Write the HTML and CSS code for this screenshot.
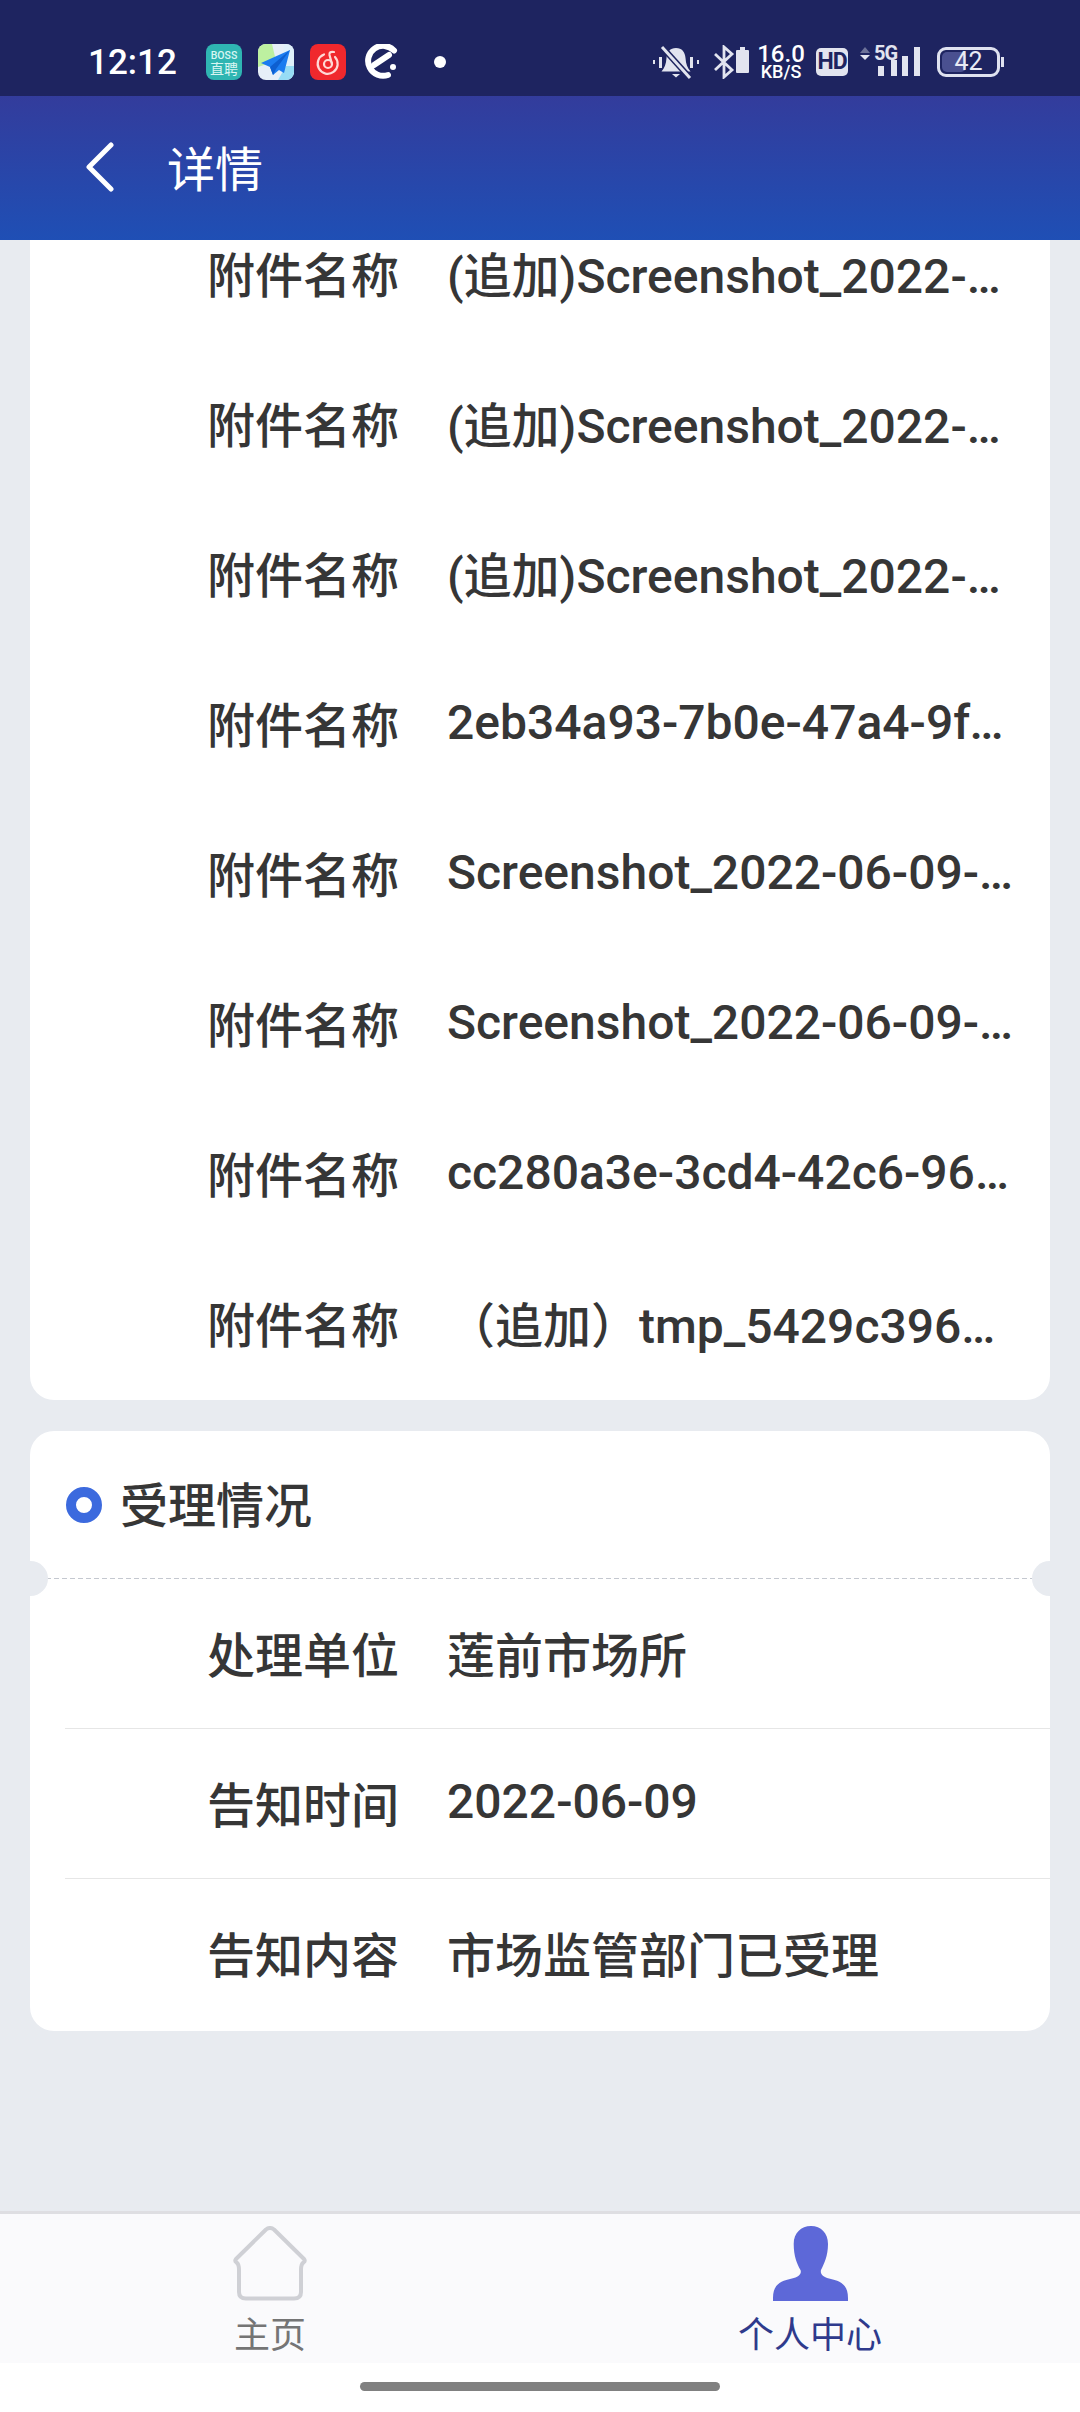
FILE: index.html
```html
<!DOCTYPE html>
<html lang="zh-CN">
<head>
    <meta charset="UTF-8">
    <meta name="viewport" content="width=device-width, initial-scale=1.0">
    <title>详情</title>
    <link rel="stylesheet" href="styles.css">
</head>
<body>
    <div class="page">
        <!-- status bar -->
        <div class="statusbar">
            <span class="time">12:12</span>
            <div class="notify-icons">
                <svg class="app-icon" viewBox="0 0 36 36">
                    <rect width="36" height="36" rx="8" fill="#2fb5b2"/>
                    <text x="18" y="15" text-anchor="middle" class="boss-en">BOSS</text>
                    <text x="18" y="30" text-anchor="middle" class="boss-cn">直聘</text>
                </svg>
                <svg class="app-icon" viewBox="0 0 36 36">
                    <rect width="36" height="36" rx="8" fill="#e6eff8"/>
                    <path d="M0 8a8 8 0 0 1 8-8h6l4 17-18 6z" fill="#bdf0a0"/>
                    <path d="M26 0h2a8 8 0 0 1 8 8v22h-12z" fill="#dff0fa"/>
                    <path d="M20 36l8-14h8v6a8 8 0 0 1-8 8z" fill="#96dcf5"/>
                    <path d="M32 6L3 19l9 4 3 8 6-5 5 3z" fill="#1b7cf0"/>
                    <path d="M32 6L12 23l3 8 3-6z" fill="#0d5fd0"/>
                </svg>
                <svg class="app-icon" viewBox="0 0 36 36">
                    <rect width="36" height="36" rx="8" fill="#f0282d"/>
                    <path d="M14 10.500A10 10 0 1 0 25 13" fill="none" stroke="#ffd9d6" stroke-width="2.200" stroke-linecap="round"/>
                    <circle cx="18" cy="20" r="4" fill="none" stroke="#ffd9d6" stroke-width="2.200"/>
                    <path d="M22 20L19.500 11Q19 7 24 8" fill="none" stroke="#ffd9d6" stroke-width="2.200" stroke-linecap="round"/>
                </svg>
                <svg class="e-icon" viewBox="0 0 34 36">
                    <path d="M30 6.500A15 15 0 1 0 24 31" fill="none" stroke="#fff" stroke-width="6" stroke-linecap="round"/>
                    <path d="M10 21L25 11" fill="none" stroke="#fff" stroke-width="6" stroke-linecap="round"/>
                    <circle cx="29" cy="23" r="3" fill="#fff"/>
                </svg>
                <span class="dot"></span>
            </div>
            <div class="system-icons">
                <svg class="bell" viewBox="0 0 48 33">
                    <path d="M24 2c-6 0-9 4-9.500 10-.4 6-2 10-5 13.500h29c-3-3.500-4.600-7.500-5-13.500C33 6 30 2 24 2zM20 28h8l-4 3.500z" fill="#e2e4ef"/>
                    <path d="M11 2l27 30" stroke="#1e2460" stroke-width="6"/>
                    <path d="M10 1l28 31" stroke="#e2e4ef" stroke-width="3"/>
                    <path d="M1 14h2v4H1zM7 11h3v11H7zM38 11h3v11h-3zM45 14h2v4h-2z" fill="#e2e4ef"/>
                </svg>
                <svg class="bt" viewBox="0 0 36 34">
                    <path d="M2 9l17 16-8 7V2l8 7L2 25" fill="none" stroke="#e2e4ef" stroke-width="2.800"/>
                    <path d="M24 5h3V2h5v3h3a1 1 0 0 1 1 1v21a1 1 0 0 1-1 1H24a1 1 0 0 1-1-1V6a1 1 0 0 1 1-1z" fill="#e2e4ef"/>
                </svg>
                <div class="speed">
                    <span class="speed-num">16.0</span>
                    <span class="speed-unit">KB/S</span>
                </div>
                <span class="hd">HD</span>
                <div class="signal">
                    <svg viewBox="0 -5 60 37" class="signal-svg">
                        <path d="M0 7l5-6 5 6z" fill="#6d7299"/>
                        <path d="M0 9h10l-5 5z" fill="#e2e4ef"/>
                        <text x="14" y="14" class="five-g">5G</text>
                        <path d="M18 20h6v10h-6zM31 14h6v16h-6zM42 10h6v20h-6zM54 1h6v29h-6z" fill="#e2e4ef"/>
                    </svg>
                </div>
                <div class="battery">
                    <span class="battery-fill"></span>
                    <span class="battery-num">42</span>
                </div>
                <span class="battery-nub"></span>
            </div>
        </div>

        <!-- title bar -->
        <div class="titlebar">
            <svg class="back" viewBox="0 0 28 50">
                <path d="M25 3L3 25l22 22" fill="none" stroke="#fff" stroke-width="5" stroke-linecap="round" stroke-linejoin="round"/>
            </svg>
            <span class="title">详情</span>
        </div>

        <!-- content, already scrolled down -->
        <div class="content">
            <div class="card card-files">
                <div class="row"><span class="label">附件名称</span><span class="value">(追加)Screenshot_2022-06-09-11-42-30-186.jpg</span></div>
                <div class="row"><span class="label">附件名称</span><span class="value">(追加)Screenshot_2022-06-09-11-42-35-204.jpg</span></div>
                <div class="row"><span class="label">附件名称</span><span class="value">(追加)Screenshot_2022-06-09-11-42-41-117.jpg</span></div>
                <div class="row"><span class="label">附件名称</span><span class="value">2eb34a93-7b0e-47a4-9fd2-61c0a8e3b7d5.jpg</span></div>
                <div class="row"><span class="label">附件名称</span><span class="value">Screenshot_2022-06-09-11-40-12-561.jpg</span></div>
                <div class="row"><span class="label">附件名称</span><span class="value">Screenshot_2022-06-09-11-40-20-318.jpg</span></div>
                <div class="row"><span class="label">附件名称</span><span class="value">cc280a3e-3cd4-42c6-96b1-7fe2d04a91c3.jpg</span></div>
                <div class="row"><span class="label">附件名称</span><span class="value">（追加）tmp_5429c396a1e07b.jpg</span></div>
            </div>

            <div class="card card-status">
                <div class="section-head">
                    <span class="ring"></span>
                    <span class="section-title">受理情况</span>
                </div>
                <div class="row row-line"><span class="label">处理单位</span><span class="value">莲前市场所</span></div>
                <div class="row row-line"><span class="label">告知时间</span><span class="value">2022-06-09</span></div>
                <div class="row"><span class="label">告知内容</span><span class="value">市场监管部门已受理</span></div>
            </div>
        </div>

        <!-- bottom tabs -->
        <div class="tabbar">
            <div class="tab">
                <svg class="tab-icon" viewBox="0 0 75 75">
                    <path d="M33 3.500Q37 .5 41 3.500L71 33Q72.500 35 70.500 36.500 68 38 68 44V66Q68 72.500 61 72.500H13Q6 72.500 6 66V44Q6 38 3.500 36.500 1.500 35 3 33Z" fill="none" stroke="#cfd0d5" stroke-width="4" stroke-linejoin="round"/>
                </svg>
                <span class="tab-text">主页</span>
            </div>
            <div class="tab tab-active">
                <svg class="tab-icon" viewBox="0 0 75 75">
                    <path d="M38 0C48 0 55 7 55 18 55 30 51 38 48 44 47 48 50 51 56 52.500 68 55 75 59 75 72V75H0V72C0 59 7 55 19 52.500 25 51 29 48 27.500 44 24 38 20.700 30 20.700 18 20.700 7 28 0 38 0Z" fill="#5d68d8"/>
                </svg>
                <span class="tab-text">个人中心</span>
            </div>
        </div>

        <div class="gesture"><span class="gesture-bar"></span></div>
    </div>
</body>
</html>
```
FILE: styles.css
```css
* {
    box-sizing: border-box;
}
body {
    margin: 0;
    font-family: Roboto, "Noto Sans CJK SC", sans-serif;
    color: #363636;
}
.page {
    display: flex;
    flex-direction: column;
    width: 1080px;
    height: 2412px;
    overflow: hidden;
    background-color: #fff;
}

/* status bar */
.statusbar {
    display: flex;
    align-items: center;
    height: 96px;
    padding: 28px 0 0 88px;
    background-color: #1e2460;
    color: #fff;
    flex-shrink: 0;
}
.time {
    width: 118px;
    font-size: 35px;
    font-weight: 500;
}
.notify-icons {
    display: flex;
    align-items: center;
    gap: 16px;
}
.app-icon {
    width: 36px;
    height: 36px;
}
.e-icon {
    width: 34px;
    height: 36px;
    margin-left: 2px;
}
.dot {
    width: 12px;
    height: 12px;
    margin-left: 20px;
    border-radius: 50%;
    background-color: #fff;
}
.boss-en {
    font-size: 10.5px;
    font-weight: 500;
    fill: #d8f5f2;
}
.boss-cn {
    font-size: 14px;
    font-family: "Noto Sans CJK SC", sans-serif;
    fill: #d8f5f2;
}
.system-icons {
    display: flex;
    align-items: center;
    margin-left: 206px;
}
.bell {
    width: 48px;
    height: 33px;
}
.bt {
    width: 36px;
    height: 34px;
    margin-left: 13px;
}
.speed {
    display: flex;
    flex-direction: column;
    align-items: center;
    width: 46px;
    margin-left: 9px;
    font-weight: 500;
}
.speed-num {
    font-size: 24px;
    line-height: 19px;
}
.speed-unit {
    font-size: 18px;
    line-height: 16px;
}
.hd {
    width: 32px;
    height: 28px;
    margin-left: 12px;
    border-radius: 5px;
    background-color: #e2e4ef;
    color: #1e2460;
    font-size: 23px;
    font-weight: 700;
    letter-spacing: -1px;
    line-height: 28px;
    text-align: center;
}
.signal {
    margin: 0 0 5px 12px;
}
.signal-svg {
    display: block;
    width: 60px;
    height: 37px;
}
.five-g {
    font-size: 20px;
    font-weight: 700;
    letter-spacing: -1px;
    fill: #e2e4ef;
}
.battery {
    position: relative;
    width: 63px;
    height: 30px;
    margin-left: 17px;
    border: 3px solid #dfe2f0;
    border-radius: 9px;
    text-align: center;
}
.battery-fill {
    position: absolute;
    left: 2px;
    top: 2px;
    bottom: 2px;
    width: 24px;
    border-radius: 5px;
    background-color: #4a5090;
}
.battery-num {
    position: relative;
    display: block;
    color: #e8eaf4;
    font-size: 25px;
    line-height: 24px;
}
.battery-nub {
    width: 3px;
    height: 10px;
    margin-left: 1px;
    background-color: #dfe2f0;
}

/* title bar */
.titlebar {
    display: flex;
    align-items: center;
    height: 144px;
    padding-left: 86px;
    background: linear-gradient(#333c9c, #1f4fb5);
    flex-shrink: 0;
}
.back {
    width: 28px;
    height: 50px;
    margin-bottom: 2px;
}
.title {
    margin: 0 0 5px 53px;
    color: #fff;
    font-size: 48px;
}

/* content */
.content {
    flex: 1;
    display: flex;
    flex-direction: column;
    gap: 31px;
    padding: 0 30px;
    overflow: hidden;
    background-color: #e8ebf0;
}
.card {
    position: relative;
    flex-shrink: 0;
    padding-left: 35px;
    border-radius: 24px;
    background-color: #fff;
    overflow: hidden;
}
.card-files {
    margin-top: -41px;
    padding-bottom: 1px;
}
.card-status {
    padding-bottom: 2px;
}
.row {
    display: flex;
    align-items: center;
    gap: 48px;
    height: 150px;
    padding-bottom: 4px;
    font-size: 48px;
}
.row-line {
    border-bottom: 1px solid #e6e6e6;
}
.label {
    width: 334px;
    flex-shrink: 0;
    font-weight: 500;
    text-align: right;
}
.value {
    width: 572px;
    font-weight: 500;
    white-space: nowrap;
    overflow: hidden;
    text-overflow: ellipsis;
}

/* section heading with ticket notches */
.section-head {
    display: flex;
    align-items: center;
    gap: 18px;
    height: 148px;
    margin-left: -35px;
    padding: 0 0 7px 36px;
    position: relative;
    background: repeating-linear-gradient(90deg, #c4c8d0 0 5px, transparent 5px 8px) bottom / 100% 1px no-repeat;
    font-size: 48px;
    font-weight: 500;
}
.section-head::before,
.section-head::after {
    content: "";
    position: absolute;
    bottom: -17px;
    width: 35px;
    height: 35px;
    border-radius: 50%;
    background-color: #e8ebf0;
}
.section-head::before {
    left: -17px;
}
.section-head::after {
    right: -17px;
}
.ring {
    width: 36px;
    height: 36px;
    margin-top: 6px;
    border: 10px solid #3c6ade;
    border-radius: 50%;
}

/* bottom tabs */
.tabbar {
    display: flex;
    height: 152px;
    border-top: 3px solid #dedee2;
    background-color: #fafafc;
    flex-shrink: 0;
}
.tab {
    flex: 1;
    display: flex;
    flex-direction: column;
    align-items: center;
    padding-top: 12px;
    color: #757575;
}
.tab-active {
    color: #2f3a8c;
}
.tab-icon {
    width: 75px;
    height: 75px;
}
.tab-text {
    margin-top: 9px;
    font-size: 36px;
    line-height: 52px;
}

/* gesture bar */
.gesture {
    display: flex;
    justify-content: center;
    height: 49px;
    padding-top: 19px;
    flex-shrink: 0;
}
.gesture-bar {
    width: 360px;
    height: 9px;
    border-radius: 5px;
    background-color: #808080;
}
```
